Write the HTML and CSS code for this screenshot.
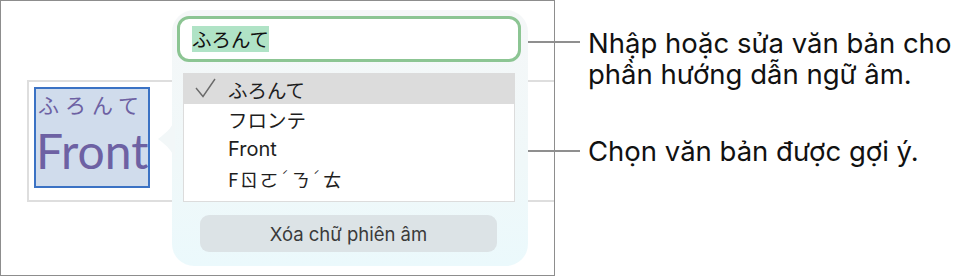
FILE: index.html
```html
<!DOCTYPE html>
<html lang="vi">
<head>
<meta charset="utf-8">
<link rel="stylesheet" href="styles.css">
</head>
<body>
<div class="figure">
  <div class="shot">
    <div class="doc">
      <div class="sel">
        <div class="ruby">ふろんて</div>
        <div class="base">Front</div>
      </div>
    </div>
    <div class="popover">
      <svg class="pointer" width="20" height="50" viewBox="0 0 20 50"><path d="M20 0 C20 12 12 18 3 25 C12 32 20 38 20 50 Z" fill="#f2f7f8"/></svg>
      <div class="input"><span class="hl">ふろんて</span></div>
      <div class="list">
        <div class="row active">
          <svg class="check" width="34" height="30" viewBox="0 0 34 30"><path d="M12 14 L19 22.5 L31 5" fill="none" stroke="#6a6a6a" stroke-width="1.4"/></svg>
          <span>ふろんて</span>
        </div>
        <div class="row"><span>フロンテ</span></div>
        <div class="row"><span class="latin">Front</span></div>
        <div class="row"><span class="bpmf">Fㄖㄛ<span class="tone">ˊ</span>ㄋ<span class="tone">ˊ</span>ㄊ</span></div>
      </div>
      <div class="btn">Xóa chữ phiên âm</div>
    </div>
  </div>
  <div class="callouts">
    <div class="callout c1">
      <span class="leader"></span>
      <p>Nhập hoặc sửa văn bản cho<br>phần hướng dẫn ngữ âm.</p>
    </div>
    <div class="callout c2">
      <span class="leader"></span>
      <p>Chọn văn bản được gợi ý.</p>
    </div>
  </div>
</div>
</body>
</html>
```

FILE: styles.css
```css
html, body {
  margin: 0;
  padding: 0;
  background: #ffffff;
}

body {
  font-family: Inter, "Noto Sans CJK JP", sans-serif;
  color: #1d1d1d;
}

.figure {
  display: flex;
  align-items: flex-start;
  width: 964px;
  height: 278px;
}

.shot {
  position: relative;
  flex: none;
  width: 553px;
  height: 274px;
  border: 1px solid #8d8d8d;
  overflow: hidden;
}

.doc {
  margin: 79px 0 0 26px;
  width: 600px;
  height: 113px;
  border: 2px solid #dedede;
  padding: 5px 0 0 5px;
  box-sizing: content-box;
}

.sel {
  width: 112px;
  height: 97px;
  border: 2px solid #3b72c4;
  background: #d0dcec;
  overflow: hidden;
  color: #6d61a3;
}

.ruby {
  font-family: "Noto Sans CJK JP", sans-serif;
  font-size: 21px;
  line-height: 24px;
  letter-spacing: 6px;
  margin: 3px 0 0 2px;
  white-space: nowrap;
}

.base {
  font-family: Lato, sans-serif;
  font-size: 48px;
  line-height: 56px;
  margin: 7px 0 0 0;
  white-space: nowrap;
}

.popover {
  position: absolute;
  left: 171px;
  top: 9px;
  width: 356px;
  height: 256px;
  border-radius: 22px;
  background: linear-gradient(180deg, #f5f7f8 0%, #f0f8f9 60%, #ebf9fc 100%);
  box-sizing: border-box;
  padding: 6px 7px 0 5px;
}

.pointer {
  position: absolute;
  left: -17px;
  top: 104px;
}

.input {
  height: 46px;
  box-sizing: border-box;
  border: 3px solid #8cc593;
  border-radius: 12px;
  background: #ffffff;
  padding: 0 0 0 12px;
  display: flex;
  align-items: center;
}

.hl {
  font-family: "Noto Sans CJK JP", sans-serif;
  font-size: 19.5px;
  line-height: 26px;
  background: #b0e3c6;
  color: #111;
}

.list {
  margin: 11px 6px 0 6px;
  height: 129px;
  box-sizing: border-box;
  border: 1px solid #dcdcdc;
  background: #ffffff;
}

.row {
  position: relative;
  height: 30px;
  display: flex;
  align-items: center;
  padding-left: 44px;
  font-family: "Noto Sans CJK JP", sans-serif;
  font-size: 19.5px;
  color: #1e1e1e;
}

.row.active {
  background: #dcdcdc;
}

.check {
  position: absolute;
  left: 0;
  top: 0;
}

.latin {
  font-family: Inter, sans-serif;
  font-size: 20px;
}

.bpmf {
  font-family: "Noto Sans CJK TC", sans-serif;
  font-size: 18.5px;
  letter-spacing: 1.5px;
}

.tone {
  font-size: 11px;
  vertical-align: 0.6em;
  letter-spacing: 3px;
  margin-left: 2px;
}

.btn {
  margin: 13px 24px 0 23px;
  height: 37px;
  border-radius: 9px;
  background: #dce3e6;
  display: flex;
  align-items: center;
  justify-content: center;
  font-size: 18.5px;
  color: #3a3a3a;
}

.callouts {
  display: flex;
  flex-direction: column;
  margin-left: -40px;
  padding-top: 28px;
}

.callout {
  display: flex;
  align-items: flex-start;
}

.leader {
  flex: none;
  height: 2px;
  background: #8f8f8f;
  margin-top: 12.5px;
}

.c1 .leader {
  width: 59px;
  margin-left: 6px;
}

.c2 {
  margin-top: 46px;
}

.c2 .leader {
  width: 65px;
  margin-top: 13.5px;
}

.callout p {
  margin: 0 0 0 8px;
  font-size: 27.5px;
  line-height: 31px;
  color: #111111;
  white-space: nowrap;
}
```
